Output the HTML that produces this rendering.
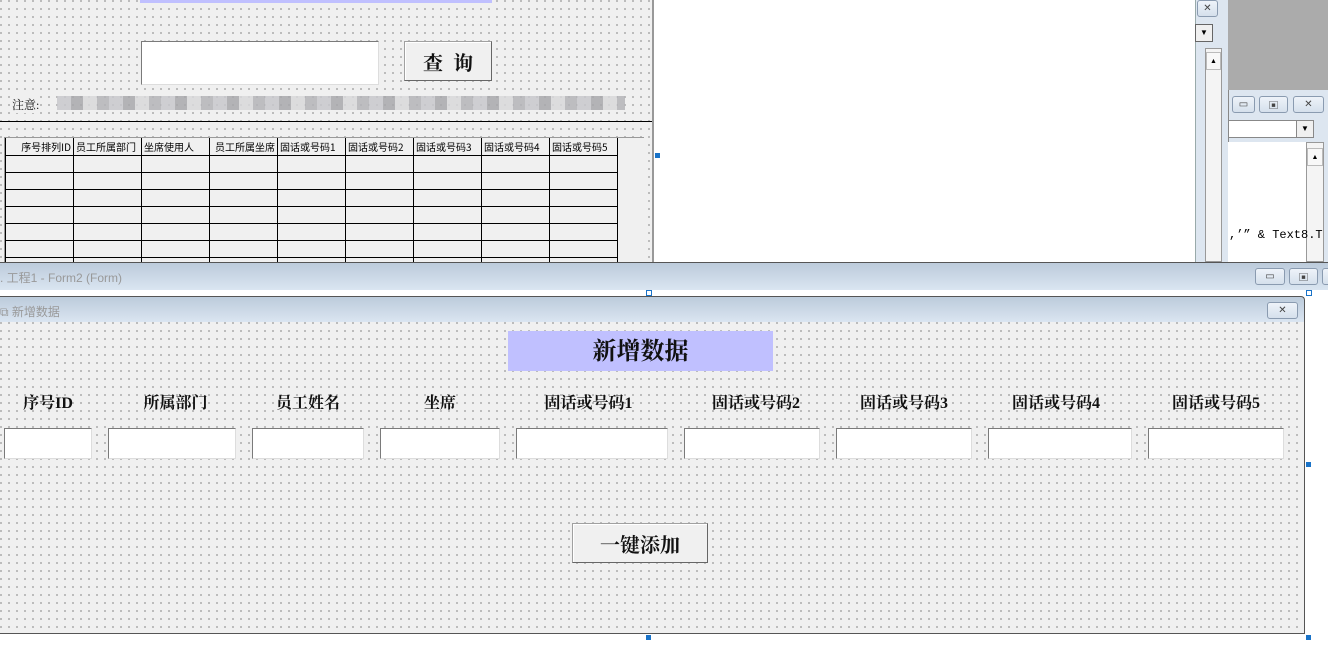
<!DOCTYPE html>
<html><head><meta charset="utf-8"><style>
*{margin:0;padding:0;box-sizing:border-box}
body{width:1328px;height:665px;position:relative;overflow:hidden;background:#fff;font-family:"Liberation Serif","Noto Serif CJK SC",serif}
.a{position:absolute}
.dots{background-color:#f0f0f0;background-image:radial-gradient(circle at 1px 1px,#333 0.6px,transparent 0.8px);background-size:8px 8px}
.tb{background:#fff;border:1px solid #a0a0a0;border-top-color:#7a7a7a;border-left-color:#7a7a7a;border-right-color:#ddd;border-bottom-color:#ddd}
.btn{background:#f0f0f0;border:1px solid #a0a0a0;border-right-color:#666;border-bottom-color:#666;box-shadow:inset 1px 1px #fff;display:flex;align-items:center;justify-content:center;font-weight:bold;color:#111}
.lbl{font-weight:bold;font-size:16px;text-align:center;color:#111;height:20px;line-height:20px}
.wb{border:1px solid #8a9bb0;border-radius:3px;background:linear-gradient(#eef3f9,#d5e0ec);display:flex;align-items:center;justify-content:center;font-size:10px;color:#444}
.h{position:absolute;width:5px;height:5px;background:#1a73c8}
.grid td{border-right:1px solid #000;border-bottom:1px solid #000;height:17px;width:68px;font-size:10px;font-family:"Noto Sans CJK SC",sans-serif;white-space:nowrap;overflow:hidden;padding:0 2px;line-height:15px}
</style></head><body>
<div class="a dots" style="left:0;top:0;width:652px;height:262px"></div>
<div class="a" style="left:652px;top:0;width:2px;height:262px;background:#999"></div>
<div class="a" style="left:140px;top:0;width:352px;height:3px;background:#c0c0ff"></div>
<div class="a tb" style="left:141px;top:41px;width:238px;height:44px"></div>
<div class="a btn" style="left:404px;top:41px;width:88px;height:40px;font-size:20px;letter-spacing:10px;padding-left:10px">查询</div>
<div class="a" style="left:12px;top:96px;font-size:12px;color:#111;background:#f0f0f0">注意:</div>
<div class="a" style="left:57px;top:96px;width:568px;height:14px;background:repeating-linear-gradient(90deg,#c8c8cc 0 14px,#a8a8ac 14px 26px,#d8d8da 26px 40px,#b4b4b8 40px 52px);opacity:.85"></div>
<div class="a" style="left:0;top:121px;width:652px;height:1px;background:#000"></div>
<div class="a" style="left:4px;top:137px;width:640px;height:125px;background:#f0f0f0;border-left:1px solid #999;border-top:1px solid #999;overflow:hidden">
<table class="grid" style="border-collapse:collapse;border-left:1px solid #000">
<tr><td style="text-align:right">序号排列ID</td><td>员工所属部门</td><td>坐席使用人</td><td style="text-align:right">员工所属坐席</td><td>固话或号码1</td><td>固话或号码2</td><td>固话或号码3</td><td>固话或号码4</td><td>固话或号码5</td></tr>
<tr><td></td><td></td><td></td><td></td><td></td><td></td><td></td><td></td><td></td></tr>
<tr><td></td><td></td><td></td><td></td><td></td><td></td><td></td><td></td><td></td></tr>
<tr><td></td><td></td><td></td><td></td><td></td><td></td><td></td><td></td><td></td></tr>
<tr><td></td><td></td><td></td><td></td><td></td><td></td><td></td><td></td><td></td></tr>
<tr><td></td><td></td><td></td><td></td><td></td><td></td><td></td><td></td><td></td></tr>
<tr><td></td><td></td><td></td><td></td><td></td><td></td><td></td><td></td><td></td></tr>
<tr><td></td><td></td><td></td><td></td><td></td><td></td><td></td><td></td><td></td></tr>
</table></div>
<div class="h" style="left:655px;top:153px"></div>
<div class="a" style="left:1195px;top:0;width:33px;height:262px;background:#dde6f0;border-left:1px solid #9aa"></div>
<div class="a wb" style="left:1197px;top:0;width:21px;height:17px">✕</div>
<div class="a" style="left:1195px;top:24px;width:18px;height:18px;background:#f0f0f0;border:1px solid #666;font-size:8px;text-align:center;line-height:16px">▼</div>
<div class="a" style="left:1205px;top:48px;width:17px;height:214px;background:#f4f4f4;border:1px solid #999"></div>
<div class="a" style="left:1206px;top:52px;width:15px;height:18px;border:1px solid #bbb;font-size:7px;text-align:center;line-height:16px;background:#f8f8f8">▲</div>
<div class="a" style="left:1228px;top:0;width:100px;height:90px;background:#ababab"></div>
<div class="a" style="left:1228px;top:90px;width:100px;height:172px;background:#dde6f0;border-left:1px solid #888"></div>
<div class="a wb" style="left:1232px;top:96px;width:23px;height:17px">▭</div>
<div class="a wb" style="left:1259px;top:96px;width:29px;height:17px">▣</div>
<div class="a wb" style="left:1293px;top:96px;width:31px;height:17px">✕</div>
<div class="a" style="left:1228px;top:120px;width:86px;height:18px;background:#fff;border:1px solid #888"></div>
<div class="a" style="left:1296px;top:121px;width:17px;height:16px;background:#f0f0f0;border-left:1px solid #888;font-size:8px;text-align:center;line-height:16px">▼</div>
<div class="a" style="left:1228px;top:142px;width:78px;height:120px;background:#fff"></div>
<div class="a" style="left:1306px;top:142px;width:18px;height:120px;background:#f4f4f4;border:1px solid #999"></div>
<div class="a" style="left:1307px;top:148px;width:16px;height:18px;border:1px solid #bbb;font-size:7px;text-align:center;line-height:16px;background:#f8f8f8">▲</div>
<div class="a" style="left:1229px;top:228px;font-size:12px;font-family:'Liberation Mono','Noto Serif CJK SC',monospace">,’” &amp; Text8.T</div>
<div class="a" style="left:0;top:262px;width:1328px;height:28px;background:linear-gradient(#bccbdb,#dae5f1);border-top:1px solid #555"></div>
<div class="a" style="left:0;top:269px;font-size:12px;color:#999;font-family:'Liberation Sans','Noto Sans CJK SC',sans-serif">. 工程1 - Form2 (Form)</div>
<div class="a wb" style="left:1255px;top:268px;width:30px;height:17px">▭</div>
<div class="a wb" style="left:1289px;top:268px;width:29px;height:17px">▣</div>
<div class="a wb" style="left:1322px;top:268px;width:10px;height:17px"></div>
<div class="a" style="left:0;top:290px;width:1328px;height:6px;background:#fff"></div>
<div class="a" style="left:646px;top:290px;width:6px;height:6px;border:1px solid #1a73c8;background:#fff"></div>
<div class="a" style="left:1306px;top:290px;width:6px;height:6px;border:1px solid #1a73c8;background:#fff"></div>
<div class="a" style="left:0;top:296px;width:1305px;height:26px;background:linear-gradient(#bccbdb,#dae5f1);border-top:1px solid #555;border-right:1px solid #555;border-top-right-radius:4px"></div>
<div class="a" style="left:0;top:303px;font-size:12px;color:#999;font-family:'Liberation Sans','Noto Sans CJK SC',sans-serif">⧉ 新增数据</div>
<div class="a wb" style="left:1267px;top:302px;width:31px;height:17px">✕</div>
<div class="a dots" style="left:0;top:322px;width:1305px;height:312px;border-right:1px solid #555;border-bottom:1px solid #555"></div>
<div class="a" style="left:508px;top:331px;width:265px;height:40px;background:#c0c0ff;font-weight:bold;font-size:24px;text-align:center;line-height:42px;color:#111">新增数据</div>
<div class="a lbl" style="left:4px;top:394px;width:88px">序号ID</div>
<div class="a lbl" style="left:108px;top:394px;width:135px">所属部门</div>
<div class="a lbl" style="left:252px;top:394px;width:112px">员工姓名</div>
<div class="a lbl" style="left:380px;top:394px;width:120px">坐席</div>
<div class="a lbl" style="left:516px;top:394px;width:145px">固话或号码1</div>
<div class="a lbl" style="left:684px;top:394px;width:144px">固话或号码2</div>
<div class="a lbl" style="left:836px;top:394px;width:136px">固话或号码3</div>
<div class="a lbl" style="left:988px;top:394px;width:136px">固话或号码4</div>
<div class="a lbl" style="left:1148px;top:394px;width:136px">固话或号码5</div>
<div class="a tb" style="left:4px;top:428px;width:88px;height:31px"></div>
<div class="a tb" style="left:108px;top:428px;width:128px;height:31px"></div>
<div class="a tb" style="left:252px;top:428px;width:112px;height:31px"></div>
<div class="a tb" style="left:380px;top:428px;width:120px;height:31px"></div>
<div class="a tb" style="left:516px;top:428px;width:152px;height:31px"></div>
<div class="a tb" style="left:684px;top:428px;width:136px;height:31px"></div>
<div class="a tb" style="left:836px;top:428px;width:136px;height:31px"></div>
<div class="a tb" style="left:988px;top:428px;width:144px;height:31px"></div>
<div class="a tb" style="left:1148px;top:428px;width:136px;height:31px"></div>
<div class="a btn" style="left:572px;top:523px;width:136px;height:40px;font-size:20px">一键添加</div>
<div class="h" style="left:1306px;top:462px"></div>
<div class="h" style="left:646px;top:635px"></div>
<div class="h" style="left:1306px;top:635px"></div>
</body></html>
